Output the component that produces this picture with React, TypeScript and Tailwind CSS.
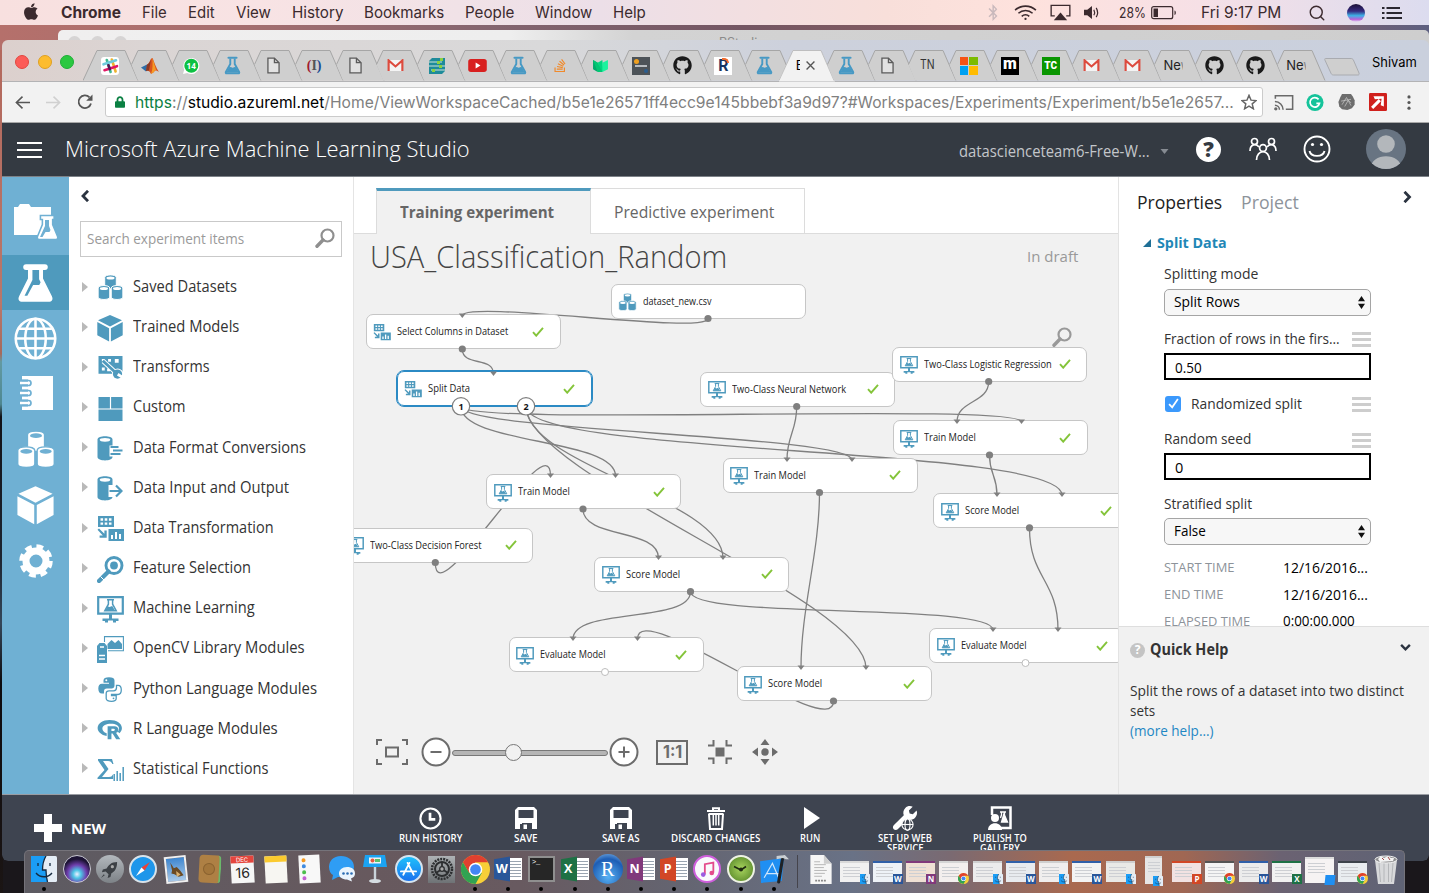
import { useLayoutEffect, useRef, useState } from "react";
import type { ReactNode } from "react";
import { FaApple, FaBluetoothB, FaGithub, FaStackOverflow, FaLock } from "react-icons/fa";
import { Search } from "lucide-react";

/* ---------- text that is condensed to a given width ---------- */
function Fit({ w, className = "", children }: { w: number; className?: string; children: ReactNode }) {
  const ref = useRef<HTMLSpanElement>(null);
  const [scale, setScale] = useState(1);
  useLayoutEffect(() => {
    if (ref.current && ref.current.offsetWidth) {
      setScale(w / ref.current.offsetWidth);
    }
  }, [w]);
  return (
    <span className={`inline-block shrink-0 whitespace-nowrap ${className}`} style={{ width: w }}>
      <span ref={ref} className="inline-block origin-left" style={{ transform: `scaleX(${scale})` }}>
        {children}
      </span>
    </span>
  );
}

/* ---------- shared glyphs ---------- */
const FLASK =
  "M6.5 1h11a1.6 1.6 0 0 1 0 3.4H16.400v5l5.200 10.300c.9 1.900 0 3.300-2 3.300H4.400c-2 0-2.900-1.400-2-3.300L7.600 9.400v-5H6.500a1.600 1.600 0 0 1 0-3.400z";
function Flask({ className = "" }: { className?: string }) {
  return (
    <svg viewBox="0 0 24 24" className={className} fill="currentColor" fillRule="evenodd">
      <path d={FLASK + "M10.200 4.400v5.800L5.600 19.500h1.600l3.400-6.300h3.600l.8-1.600-.9-1.800V4.400z"} />
    </svg>
  );
}
function FlaskLine({ className = "" }: { className?: string }) {
  return (
    <svg viewBox="0 0 24 24" className={className}>
      <path d="M9.200 3v7L3.600 20.200c-.4.900 0 1.800 1 1.800h14.800c1 0 1.400-.9 1-1.800L14.800 10V3" fill="none" stroke="currentColor" strokeWidth="2.400" />
      <path d="M7 2.200h10" stroke="currentColor" strokeWidth="2.800" strokeLinecap="round" />
      <path d="M7.500 14.500c2-1.500 4 1 5.500 0 1.300-.8 2.300-.9 3.500 0l3.600 6.500H3.900z" fill="currentColor" />
    </svg>
  );
}
function Cylinders({ className = "", hole = "#fff" }: { className?: string; hole?: string }) {
  const drum = (x: number, y: number) => (
    <g key={`${x}`}>
      <path d={`M${x} ${y}c0-3.400 12-3.400 12 0v9.500c0 3.200-12 3.200-12 0z`} fill="currentColor" stroke={hole} strokeWidth="1" />
      <ellipse cx={x + 6} cy={y + 0.6} rx="4.200" ry="1.600" fill={hole} />
    </g>
  );
  return (
    <svg viewBox="0 0 28 28" className={className}>
      {drum(8, 3)}
      {drum(1.200, 14)}
      {drum(14.800, 14)}
    </svg>
  );
}
function Cube({ className = "" }: { className?: string }) {
  return (
    <svg viewBox="0 0 26 27" className={className} fill="currentColor">
      <path d="M13 0l12 5.200-12 6.300L1 5.200zM.3 7l11.800 6.200v13.400L.3 20.200zM25.700 7l-11.800 6.200v13.400l11.800-6.400z" />
    </svg>
  );
}
function Monitor({ className = "" }: { className?: string }) {
  return (
    <svg viewBox="0 0 27 27" className={className}>
      <path d="M1.200 1.200h24.600v16.400H1.200z" fill="none" stroke="currentColor" strokeWidth="2.200" />
      <path d="M12 18h3v4.500h6.500v2.500H19v1.500h-3v-2h-5v2H8v-1.500H5.500v-2.500H12z" fill="currentColor" />
      <path d="M10 3.800h7M11.400 4v4.200L7.800 14.700h11.400L15.600 8.200V4" fill="none" stroke="currentColor" strokeWidth="1.500" />
      <path d="M10.500 10.200l2 .9 2.700-1 3 4.600H8.300z" fill="currentColor" />
    </svg>
  );
}
function Transform({ className = "" }: { className?: string }) {
  return (
    <svg viewBox="0 0 27 26" className={className} fill="currentColor" fillRule="evenodd">
      <path d="M1 0h16v11H1zM3.500 2.300v2.400h2.600V2.300zm4.200 0v2.400h2.600V2.300zm4.200 0v2.400h2.600V2.300zM3.500 6.400v2.400h2.600V6.400zm4.200 0v2.400h2.600V6.400zm4.200 0v2.400h2.600V6.400z" />
      <path d="M11.500 13H27v12H11.500zM14 19v4h2v-4zm4-3v7h2v-7zm4 2v5h2v-5z" />
      <path d="M.5 13.800l1.500-1.300 5.400 5.200V14.500h2.300v7.300H2.600v-2.300h3.200z" />
    </svg>
  );
}
function Magnifier({ className = "" }: { className?: string }) {
  return (
    <svg viewBox="0 0 20 20" className={className} fill="none" stroke="currentColor">
      <circle cx="12.500" cy="7.500" r="6" strokeWidth="2.200" />
      <path d="M8 12l-6 6.200" strokeWidth="3.400" strokeLinecap="round" />
    </svg>
  );
}
function Wrench({ className = "" }: { className?: string }) {
  return (
    <svg viewBox="0 0 24 24" className={className} fill="currentColor">
      <path d="M22.700 5.100l-3.500 3.500-2.900-.7-.7-2.900 3.500-3.500C16.600.5 14 1 12.300 2.700c-1.900 1.900-2.300 4.500-1.400 6.700L1.600 18.700c-1 1-1 2.700 0 3.700s2.700 1 3.700 0l9.300-9.300c2.200.9 4.900.5 6.700-1.400 1.800-1.700 2.300-4.300 1.400-6.600z" />
    </svg>
  );
}

/* ---------- menu bar ---------- */
const MENUS: [string, number, string][] = [
  ["Chrome", 60, "font-bold"],
  ["File", 25, ""],
  ["Edit", 27, ""],
  ["View", 35, ""],
  ["History", 51, ""],
  ["Bookmarks", 80, ""],
  ["People", 49, ""],
  ["Window", 57, ""],
  ["Help", 33, ""],
];
function MenuBar() {
  return (
    <div className="absolute inset-x-0 top-0 flex h-[25px] items-center bg-[linear-gradient(90deg,#f8e0df_0%,#f8e3e4_18%,#f1e2e7_32%,#ecdfe8_42%,#f8dfda_62%,#fee2dd_72%,#f6e0e6_84%,#dcdcef_100%)] font-['Inter',sans-serif] text-[15.500px] text-[#3b2a2e]">
      <FaApple className="ml-[22px] h-[19px] w-[18px] -translate-y-px" />
      <div className="ml-[21px] flex items-center gap-[21px]">
        {MENUS.map(([m, w, c]) => (
          <Fit key={m} w={w} className={c}>{m}</Fit>
        ))}
      </div>
      <FaBluetoothB className="ml-[337px] h-[17px] w-5 text-[#c9b9bc]" />
      <svg viewBox="0 0 26 18" className="ml-[10px] h-[17px] w-[25px]" fill="none" stroke="#3b2a2e" strokeWidth="1.700">
        <path d="M2 6.500C8 .8 18 .8 24 6.500M5.500 9.800c4.300-3.900 10.700-3.900 15 0M9 13c2.300-2 5.700-2 8 0" />
        <circle cx="13" cy="15.800" r="1.200" fill="#3b2a2e" stroke="none" />
      </svg>
      <svg viewBox="0 0 22 17" className="ml-[12px] h-[17px] w-[21px]">
        <path d="M5 12H1.200V1h19.600v11H17" fill="none" stroke="#3b2a2e" strokeWidth="1.400" />
        <path d="M11 8.500l7 8H4z" fill="#3b2a2e" />
      </svg>
      <svg viewBox="0 0 18 16" className="ml-[12px] h-[15px] w-[17px]">
        <path d="M1 5h3.500L9.500 1v14l-5-4H1z" fill="#3b2a2e" />
        <path d="M11.500 5c1 1.800 1 4.200 0 6M14 3c1.800 3 1.800 7 0 10" fill="none" stroke="#3b2a2e" strokeWidth="1.300" />
      </svg>
      <Fit w={27} className="ml-[19px] text-[14px]">28%</Fit>
      <svg viewBox="0 0 26 14" className="ml-[5px] h-[14px] w-[26px]">
        <rect x=".7" y=".7" width="21" height="12" rx="2" fill="none" stroke="#3b2a2e" strokeWidth="1.200" />
        <rect x="2.500" y="2.500" width="4.500" height="8.500" fill="#3b2a2e" />
        <path d="M23.500 4.500c1.800.5 1.800 4 0 4.500z" fill="#3b2a2e" />
      </svg>
      <Fit w={80} className="ml-[24px]">Fri 9:17 PM</Fit>
      <Search className="ml-[27px] h-[18px] w-[18px]" strokeWidth={1.900} />
      <span className="ml-[21px] h-[18px] w-[18px] rounded-full bg-[linear-gradient(180deg,#1b1035_0%,#352a80_40%,#3fb3e8_65%,#b85fd8_85%,#e9e0f5_100%)]" />
      <svg viewBox="0 0 20 12" className="ml-[17px] h-[12px] w-5" fill="#2a2730">
        <path d="M0 0h2.500v2H0zM4.500 0H18v2H4.500zM0 5h2.500v2H0zM4.500 5H20v2H4.500zM0 10h2.500v2H0zM4.500 10H20v2H4.500z" />
      </svg>
    </div>
  );
}

/* ---------- browser tabs ---------- */
const SlackIcon = () => (
  <svg viewBox="0 0 18 18" className="h-[18px] w-[18px]">
    <rect width="18" height="18" rx="3" fill="#fff" />
    <g strokeWidth="2.600" strokeLinecap="round">
      <path d="M5.800 3l3.800 12" stroke="#3eb991" />
      <path d="M10.800 2.500l3.800 12" stroke="#ecb22e" />
      <path d="M2.500 7.300l12.500-4" stroke="#6ecadc" />
      <path d="M3.500 13.200l12.500-4" stroke="#e01765" />
      <path d="M7.500 8.300l1.300 3.900" stroke="#541755" />
    </g>
  </svg>
);
const MatlabIcon = () => (
  <svg viewBox="0 0 18 18" className="h-[18px] w-[18px]">
    <path d="M0 10.500l6-3 3 3-4 4z" fill="#2f6ea8" />
    <path d="M6 7.500c3-1 3-6.500 5.500-6.500C13 4 15 11 18 15c-3-2-4-2-5 0l-3 2c-1-3-3-4-5-3z" fill="#d9541e" />
    <path d="M11.500 1c1.200 4 2.500 8 3.500 12-1 .300-1.500.8-2 2l-3 2c2-5 1.500-10 1.500-16z" fill="#f59a23" />
    <path d="M6 7.500c2-.5 3-3 4-5l-2 11-3 .5z" fill="#5a2a2a" opacity=".6" />
  </svg>
);
const WhatsIcon = () => (
  <svg viewBox="0 0 18 18" className="h-[18px] w-[18px]">
    <path d="M1 17l1.200-4.300A8 8 0 1 1 5.300 16z" fill="#fff" />
    <circle cx="9.300" cy="8.800" r="7" fill="#0dc143" />
    <text x="9.200" y="11.800" textAnchor="middle" className="font-['Open_Sans',sans-serif] text-[8px] font-bold" fill="#fff">14</text>
  </svg>
);
const FlaskIcon = () => <FlaskLine className="h-[19px] w-[19px] text-[#4799c4]" />;
const PageIcon = () => (
  <svg viewBox="0 0 14 18" className="h-[17px] w-[13px]" fill="#e2e2e2" stroke="#5b5b5b" strokeWidth="1.400">
    <path d="M1 1h7l5 5v11H1zM8 1v5h5" />
  </svg>
);
const ParenIcon = () => (
  <span className="font-['Liberation_Serif',serif] text-[14px] font-bold leading-none">
    <span className="text-[#a01c30]">(</span>
    <span className="text-[#555]">I</span>
    <span className="text-[#1b4a8f]">)</span>
  </span>
);
const GmailIcon = () => (
  <svg viewBox="0 0 18 14" className="h-[13px] w-[17px]">
    <path d="M1 1h16v12H1z" fill="#f4f4f4" />
    <path d="M1.600 13V1.500L9 8l7.400-6.500V13" fill="none" stroke="#dd4b3e" strokeWidth="2.300" />
  </svg>
);
const StripeIcon = () => (
  <svg viewBox="0 0 18 18" className="h-[18px] w-[18px]">
    <path d="M4 1h13v13l-3 3H1V4z" fill="#1e8b9a" />
    <path d="M1 5h13M1 9h16M3 13h14" stroke="#cfe3d8" strokeWidth="1" />
    <path d="M12 1h3v3h-3zM9 4h3v3H9zM11 8h3v3h-3zM4 12h3v3H4z" fill="#8bd13f" />
  </svg>
);
const MediumIcon = () => (
  <svg viewBox="0 0 18 15" className="h-[14px] w-[17px]">
    <path d="M1 1l5 3v10l-5-3z" fill="#00ab6b" />
    <path d="M1 1l5 3 5 7v3L6 14z" fill="#00c773" />
    <path d="M6 4l5-3 1 11-1 2z" fill="#00d680" />
    <path d="M11 4l6-3v10l-6 3z" fill="#1cf29e" />
  </svg>
);
const DarkIcon = () => (
  <span className="relative h-[18px] w-[18px] bg-[#4d5358]">
    <span className="absolute left-0.5 top-0.5 h-[5px] w-[5px] rounded-full bg-[#f0a020]" />
    <span className="absolute left-[3px] top-[8px] h-[2px] w-[12px] bg-[#b8bcc0]" />
    <span className="absolute bottom-0.5 right-0.5 h-[4px] w-[4px] rounded-full bg-[#2a5d8e]" />
  </span>
);
const RIcon = () => (
  <span className="relative flex h-[18px] w-[18px] items-center justify-center bg-white font-['Roboto',sans-serif] text-[16px] font-bold leading-none text-[#17345f]">
    R<span className="absolute right-[3px] top-[1px] h-[5px] w-[7px] rounded-tr-full border-r-2 border-t-2 border-[#ee6a2c]" />
  </span>
);
const GhIcon = () => <FaGithub className="h-[19px] w-[19px] text-[#1a1a1a]" />;
const MsIcon = () => (
  <span className="grid h-[18px] w-[18px] shrink-0 grid-cols-2 gap-px">
    <span className="bg-[#f65314]" />
    <span className="bg-[#7cbb00]" />
    <span className="bg-[#00a1f1]" />
    <span className="bg-[#ffbb00]" />
  </span>
);
const MIcon = () => (
  <span className="flex h-[18px] w-[18px] items-center justify-center bg-black pb-1 font-['Roboto',sans-serif] text-[16px] font-black leading-none text-white">m</span>
);
const TcIcon = () => (
  <span className="flex h-[18px] w-[18px] items-center justify-center bg-[#0a9600] font-['Roboto',sans-serif] text-[10px] font-black leading-none text-white">TC</span>
);
const TnIcon = () => <Fit w={15} className="font-['Inter',sans-serif] text-[12.500px] text-[#333]">TN</Fit>;
const NeIcon = () => (
  <span className="flex w-[22px] shrink-0 items-baseline overflow-hidden pl-px font-['Inter',sans-serif] text-[13px] text-[#222]">
    <Fit w={17}>Ne</Fit><span className="w-[3px] overflow-hidden text-[#888]">w</span>
  </span>
);
const ActiveLabel = () => (
  <span className="flex items-center gap-1.5 font-['Inter',sans-serif] text-[13px] text-black">
    <span className="w-[4px] overflow-hidden">E</span>
    <svg viewBox="0 0 8 8" className="h-[9px] w-[9px]" stroke="#555" strokeWidth="1.200"><path d="M.5.5l7 7M7.500.5l-7 7" /></svg>
  </span>
);
const YtIcon = () => (
  <svg viewBox="0 0 20 14" className="h-[13px] w-[19px]"><rect width="20" height="14" rx="3" fill="#d8201f" /><path d="M8 3.800v6.400L13.200 7z" fill="#fff" /></svg>
);
const SoIcon = () => <FaStackOverflow className="h-[15px] w-[14px] text-[#f08a2c]" />;

const TABS = [
  SlackIcon, MatlabIcon, WhatsIcon, FlaskIcon, PageIcon, ParenIcon, PageIcon, GmailIcon, StripeIcon, YtIcon,
  FlaskIcon, SoIcon, MediumIcon, DarkIcon, GhIcon, RIcon, FlaskIcon, ActiveLabel, FlaskIcon, PageIcon,
  TnIcon, MsIcon, MIcon, TcIcon, GmailIcon, GmailIcon, NeIcon, GhIcon, GhIcon, NeIcon,
];

function TabStrip() {
  return (
    <div className="flex h-[42px] shrink-0 items-end border-b border-[#b3b3b5] bg-[linear-gradient(90deg,#dcd0cd_0%,#dbd5d4_10%,#d9d9da_38%,#cdd1dc_55%,#cad0dd_100%)]">
      <div className="flex w-[81px] items-center gap-[8.500px] self-center pl-[13px] pt-0.5">
        <span className="h-[14px] w-[14px] rounded-full border border-[#e2463f] bg-[#fc5b57]" />
        <span className="h-[14px] w-[14px] rounded-full border border-[#dfa023] bg-[#fdbc2e]" />
        <span className="h-[14px] w-[14px] rounded-full border border-[#1fae36] bg-[#2bc840]" />
      </div>
      {TABS.map((Icon, i) => {
        const active = i === 17;
        return (
          <div key={i} className="relative h-[31px] w-[40.930px] shrink-0">
            <svg viewBox="0 0 58 32" className="absolute left-0 top-0 h-[32px] w-[58px]">
              {active ? (
                <path d="M-1 31.500L14 .5H42L56 31.500z" fill="#f2f2f2" />
              ) : i === 0 ? (
                <path d="M0 30.500L14 .5H42L55 30.500" fill="#cfcfcf" stroke="#a6a6a6" strokeWidth="1" />
              ) : (
                <>
                  <path d="M7.500 14.500L14 .5H42L55 30.500H14z" fill="#cfcfcf" />
                  <path d="M7.500 14.500L14 .5H42L55 30.500" fill="none" stroke="#a6a6a6" strokeWidth="1" />
                </>
              )}
              {active && <path d="M0 30.500L14 .5H42L55 30.500" fill="none" stroke="#b5b5b5" strokeWidth=".8" />}
            </svg>
            <div className="relative ml-[15.500px] flex h-[31px] w-[22px] items-center justify-center">
              <Icon />
            </div>
          </div>
        );
      })}
      <svg viewBox="0 0 36 18" className="mb-[5px] ml-[13px] h-[18px] w-[36px] shrink-0">
        <path d="M1.500.5H27c1 0 2 .6 2.400 1.500L35 15c.4 1.300 0 2-1 2H9.500c-1.200 0-2-.6-2.400-1.500L.9 2C.6 1 .6.500 1.500.5z" fill="#cfcfcf" stroke="#a9abb0" />
      </svg>
      <Fit w={45} className="mb-[9px] ml-[12px] font-['Inter',sans-serif] text-[13.500px] text-black">Shivam</Fit>
    </div>
  );
}

function AddressBar() {
  return (
    <div className="flex h-[41px] shrink-0 items-center border-b border-[#a8a8a8] bg-[#f2f2f2]">
      <svg viewBox="0 0 16 14" className="ml-[13px] h-[15px] w-[15px]" fill="none" stroke="#565656" strokeWidth="1.700"><path d="M8 .8L1.500 7 8 13.200M1.500 7H16" /></svg>
      <svg viewBox="0 0 16 14" className="ml-[16px] h-[15px] w-[15px]" fill="none" stroke="#d0d0d0" strokeWidth="1.700"><path d="M8 .8L14.500 7 8 13.200M14.500 7H0" /></svg>
      <svg viewBox="0 0 16 16" className="ml-[16px] h-[16px] w-[16px]"><path d="M14 9.500A6.300 6.300 0 1 1 12.500 3.400" fill="none" stroke="#565656" strokeWidth="1.800" /><path d="M15.500.5v6.300H9.200z" fill="#565656" /></svg>
      <div className="ml-[12px] flex h-[30px] w-[1158px] items-center rounded-[3px] border border-[#cbcbcb] bg-white font-['Inter',sans-serif] text-[16px]">
        <FaLock className="ml-[9px] h-[12px] w-[10px] text-[#0b8043]" />
        <Fit w={1099} className="ml-[10px] text-[#808080]">
          <span className="text-[#0b8043]">https</span>://<span className="text-black">studio.azureml.net</span>/Home/ViewWorkspaceCached/b5e1e26571ff4ecc9e145bbebf3a9d97?#Workspaces/Experiments/Experiment/b5e1e2657...
        </Fit>
        <svg viewBox="0 0 24 24" className="ml-[7px] h-[16px] w-[16px]" fill="none" stroke="#666" strokeWidth="2.200"><path d="M12 2l3 7.200 7.500.6-5.700 5 1.800 7.400L12 18.200l-6.600 4 1.800-7.400-5.700-5L9 9.200z" /></svg>
      </div>
      <svg viewBox="0 0 22 18" className="ml-[11px] h-[17px] w-[20px]" fill="none" stroke="#6a6a6a" strokeWidth="1.700">
        <path d="M1.500 5V1.500h19v15H13M1 8a9 9 0 0 1 9 9M1 12a5 5 0 0 1 5 5" />
        <circle cx="2" cy="16" r="1" fill="#6a6a6a" />
      </svg>
      <svg viewBox="0 0 20 20" className="ml-[12px] h-[19px] w-[18px]">
        <circle cx="10" cy="10" r="9.500" fill="#15c39a" />
        <path d="M14 6.500A5.300 5.300 0 1 0 15 11h-3.500" fill="none" stroke="#fff" strokeWidth="1.900" />
      </svg>
      <svg viewBox="0 0 20 20" className="ml-[13px] h-[18px] w-[19px]">
        <path d="M5 1h10l2 3 2 4v5l-3 4-5 2-6-1-3-3-1-5 2-5z" fill="#6d6d6d" />
        <path d="M5 13l5-8 5 9M4 9l11-2M8 15l4-7 3 3" fill="none" stroke="#c9c9c9" strokeWidth=".8" />
      </svg>
      <svg viewBox="0 0 20 20" className="ml-[13px] h-[18px] w-[18px]">
        <rect width="20" height="20" rx="1.500" fill="#d0201c" />
        <path d="M3.500 16.500L12 8" stroke="#fff" strokeWidth="3.400" />
        <path d="M5 3.500h11.500V15l-3.500-1.500 1-7-7.500.5z" fill="#fff" />
      </svg>
      <svg viewBox="0 0 4 16" className="ml-[20px] h-[15px] w-[4px]" fill="#565656"><circle cx="2" cy="2" r="1.700" /><circle cx="2" cy="8" r="1.700" /><circle cx="2" cy="14" r="1.700" /></svg>
    </div>
  );
}

/* ---------- studio header ---------- */
function StudioHeader() {
  return (
    <div className="flex h-[54px] shrink-0 items-center border-b border-[#7d8288] bg-[#343a42] pb-px font-['Open_Sans',sans-serif] text-white">
      <div className="ml-[15px] mt-px flex w-[25px] flex-col gap-[5px]">
        <span className="h-[2px] bg-white" /><span className="h-[2px] bg-white" /><span className="h-[2px] bg-white" />
      </div>
      <Fit w={405} className="ml-[23px] text-[22.500px] font-light leading-[30px]">Microsoft Azure Machine Learning Studio</Fit>
      <Fit w={191} className="ml-[489px] mt-[6px] text-[15.500px] text-[#c3c6ca]">datascienceteam6-Free-W...</Fit>
      <svg viewBox="0 0 8 5" className="ml-[10px] mt-1 h-[5px] w-[9px]" fill="#868b92"><path d="M0 0h8L4 5z" /></svg>
      <span className="ml-[27px] flex h-[25px] w-[25px] items-center justify-center rounded-full bg-white text-[21px] font-extrabold leading-none text-[#343a42]">?</span>
      <svg viewBox="0 0 28 24" className="ml-[28px] h-[24px] w-[28px]" fill="none" stroke="#fff" strokeWidth="1.700">
        <circle cx="5.500" cy="4.500" r="3" /><circle cx="22.500" cy="4.500" r="3" /><circle cx="14" cy="11" r="3.400" />
        <path d="M1 14c0-7 6-8 9-4M27 14c0-7-6-8-9-4M7.500 23c0-11 13-11 13 0" />
      </svg>
      <svg viewBox="0 0 28 28" className="ml-[26px] h-[28px] w-[28px]" fill="none" stroke="#fff" strokeWidth="1.900">
        <circle cx="14" cy="14" r="12.500" /><path d="M6.500 16c1.500 6.500 13.500 6.500 15 0" />
        <circle cx="9.500" cy="9.500" r="1.600" fill="#fff" stroke="none" /><circle cx="18.500" cy="9.500" r="1.600" fill="#fff" stroke="none" />
      </svg>
      <svg viewBox="0 0 40 40" className="ml-[35px] h-[40px] w-[40px]">
        <defs><clipPath id="avatar"><circle cx="20" cy="20" r="20" /></clipPath></defs>
        <g clipPath="url(#avatar)"><rect width="40" height="40" fill="#687482" /><circle cx="20" cy="15" r="8.800" fill="#b3b7bb" /><path d="M4.500 40c0-17 31-17 31 0z" fill="#b3b7bb" /></g>
      </svg>
    </div>
  );
}

/* ---------- left navigation ---------- */
function NavRail() {
  return (
    <div className="flex w-[67px] shrink-0 flex-col items-center bg-[#6fb0d3] text-white">
      <div className="flex h-[78px] w-full items-center justify-center pt-[11px]">
        <svg viewBox="0 0 44 36" className="ml-px h-[36px] w-[44px]">
          <path d="M0 3h4l2-3h9l2 3h20v28H0z" fill="#fff" />
          <g transform="translate(22.500 10.500) scale(.98 1)" stroke="#6fb0d3" strokeWidth="1.600"><path d="M4 1h14v4h-1.500v5l5 12c.5 1.500 0 3-1.500 3H2.500C1 25 .5 23.500 1 22l5-12V5H4z" fill="#fff" /></g>
          <path d="M31 16v6l-5 11h2.500l3-5h4l1-2-1.500-4v-6" fill="#6fb0d3" />
        </svg>
      </div>
      <div className="flex h-[55px] w-full items-center justify-center bg-[#4f9abd] pt-px"><Flask className="h-[42px] w-[41px]" /></div>
      <div className="flex h-[56px] items-center">
        <svg viewBox="0 0 42 42" className="h-[43px] w-[43px]" fill="none" stroke="#fff" strokeWidth="2.500">
          <circle cx="21" cy="21" r="19.300" /><ellipse cx="21" cy="21" rx="10" ry="19.300" /><path d="M21 2v38M2 21h38M5 11.500h32M5 30.500h32" />
        </svg>
      </div>
      <div className="flex h-[53px] items-center">
        <svg viewBox="0 0 34 34" className="h-[34px] w-[34px]">
          <path d="M3 0h31v34H3z" fill="#fff" />
          <path d="M0 7h9M0 17h9M0 27h9" stroke="#6fb0d3" strokeWidth="7" />
          <path d="M1 7h9M1 17h9M1 27h9" stroke="#fff" strokeWidth="2.600" />
          <path d="M3 4.500h6.500a2.500 2.500 0 0 1 0 5H3M3 14.500h6.500a2.500 2.500 0 0 1 0 5H3M3 24.500h6.500a2.500 2.500 0 0 1 0 5H3" fill="none" stroke="#6fb0d3" strokeWidth="1.700" />
        </svg>
      </div>
      <div className="flex h-[59px] items-center pt-1"><Cylinders className="h-[41px] w-[40px]" hole="#6fb0d3" /></div>
      <div className="flex h-[55px] items-center"><Cube className="h-[39px] w-[37px]" /></div>
      <div className="flex h-[55px] items-center">
        <svg viewBox="0 0 34 34" className="h-[34px] w-[34px]">
          <circle cx="17" cy="17" r="10" fill="none" stroke="#fff" strokeWidth="7" />
          <circle cx="17" cy="17" r="14.500" fill="none" stroke="#fff" strokeWidth="4.500" strokeDasharray="6.700 4.690" />
        </svg>
      </div>
    </div>
  );
}

const MODULES: { label: string; w: number; icon: ReactNode }[] = [
  { label: "Saved Datasets", w: 104, icon: <Cylinders className="h-[28px] w-[27px]" /> },
  { label: "Trained Models", w: 106.500, icon: <Cube className="h-[27px] w-[26px]" /> },
  {
    label: "Transforms", w: 76.500, icon: (
      <svg viewBox="0 0 25 25" className="h-[24px] w-[25px]">
        <path d="M0 0h25v18.500H0z" fill="currentColor" />
        <path d="M3.500 3h3v3h-3zM10 3h3v3h-3zM17 3h4v4h-4zM3.500 12h3v3h-3zM9 13h3v3H9z" fill="#fff" />
        <path d="M5 5.500l13 12" stroke="#fff" strokeWidth="5" />
        <circle cx="20" cy="19" r="6" fill="#fff" />
        <path d="M4.500 5l14 13" stroke="currentColor" strokeWidth="3" />
        <circle cx="19.800" cy="18.800" r="4.800" fill="currentColor" /><path d="M20 19l5.500 3.500" stroke="#fff" strokeWidth="3" />
      </svg>
    ),
  },
  { label: "Custom", w: 52.500, icon: <svg viewBox="0 0 24 24" className="h-[24px] w-[25px]" fill="currentColor"><path d="M0 0h11.400v11.400H0zM12.600 0H24v11.400H12.600zM0 12.600h24V24H0z" /></svg> },
  { label: "Data Format Conversions", w: 173, icon: <svg viewBox="0 0 25 25" className="h-[25px] w-[26px]"><path d="M0 3.500C0-.8 15-.8 15 3.500V21c0 4.500-15 4.500-15 0z" fill="currentColor" /><ellipse cx="7.500" cy="3.800" rx="5.300" ry="1.900" fill="#fff" /><path d="M12 9.500h13v11H12z" fill="#fff" /><path d="M13 11h8M15.500 14.500H25M13 18h10" stroke="currentColor" strokeWidth="1.900" /></svg> },
  { label: "Data Input and Output", w: 156.500, icon: <svg viewBox="0 0 25 25" className="h-[25px] w-[26px]"><path d="M0 3.500C0-.8 15-.8 15 3.500V21c0 4.500-15 4.500-15 0z" fill="currentColor" /><ellipse cx="7.500" cy="3.800" rx="5.300" ry="1.900" fill="#fff" /><path d="M11 9h14v12H11z" fill="#fff" /><path d="M12 15h12M18.500 9.500L24 15l-5.500 5.500" fill="none" stroke="currentColor" strokeWidth="2.200" /></svg> },
  { label: "Data Transformation", w: 141, icon: <Transform className="h-[26px] w-[27px]" /> },
  { label: "Feature Selection", w: 118, icon: <svg viewBox="0 0 27 27" className="h-[27px] w-[27px]" fill="none" stroke="currentColor"><circle cx="17" cy="9.500" r="8" strokeWidth="2.900" /><circle cx="17" cy="9.500" r="3.900" fill="currentColor" stroke="none" /><path d="M11.500 15.500L2 25" strokeWidth="4.200" strokeLinecap="round" /><path d="M3.500 20.500l3.500 3.500" stroke="#fff" strokeWidth="1" /></svg> },
  { label: "Machine Learning", w: 122, icon: <Monitor className="h-[27px] w-[27px]" /> },
  { label: "OpenCV Library Modules", w: 172, icon: <svg viewBox="0 0 27 27" className="h-[27px] w-[27px]"><path d="M7.500 6V.6H26.400v14.200H11" fill="none" stroke="currentColor" strokeWidth="1.100" /><path d="M10.500 8l4-4 3.500 3 3.500-3 3.500 4v5H10.500z" fill="currentColor" /><path d="M0 10l2.500-3h5l2.500 3v17H0z" fill="currentColor" /><path d="M2 19.500h6M2 23h6M3 11h4" stroke="#fff" strokeWidth="1.300" /></svg> },
  {
    label: "Python Language Modules", w: 184, icon: (
      <svg viewBox="0 0 24 25" className="h-[25px] w-[24px]">
        <path d="M5.500 3.500C5.500 1 7.500.3 11 .3s5.500.7 5.500 3.200v5c0 2-1.200 3-3 3H9c-2.200 0-3 1-3 3v2H4c-2.500 0-3.700-2-3.700-5s1.200-4.800 3.700-4.800h7V5.800H5.500z" fill="currentColor" />
        <circle cx="8.300" cy="3.200" r="1" fill="#fff" />
        <path d="M18.500 8.300h1.500c2.300 0 3.300 1.800 3.300 4.500s-1 4.700-3.300 4.700h-6.500v1h4.700v3c0 2-1.700 2.800-4.700 2.800s-5.300-.8-5.300-2.800v-5c0-1.800 1-2.700 2.800-2.700h4.500c2 0 3-1.200 3-3z" fill="none" stroke="currentColor" strokeWidth="1.300" />
        <circle cx="15.500" cy="21.300" r=".9" fill="currentColor" />
      </svg>
    ),
  },
  { label: "R Language Modules", w: 145, icon: <svg viewBox="0 0 26 21" className="h-[20px] w-[26px]"><path fillRule="evenodd" d="M12.500 0C5.500 0 0 3.500 0 8.500c0 4 4 7.500 9.500 8.400v-3C6.500 13 5 11.300 5 9c0-3.200 4-5 9-5s8.500 1.800 8.500 5c0 1.300-.4 2.500-1.500 3.200l1.800 1.600C24.700 12.500 25.500 10.600 25.500 8.500 25.500 3.500 20 0 12.500 0z" fill="currentColor" /><path fillRule="evenodd" d="M10.500 6.500h7.200c5.300 0 5.300 6.300 1.600 7l4.500 6.800H19.500l-3.800-6.200h-1.200v6.200h-4zM14.500 9.300v2.200h2.300c1.800 0 1.800-2.200 0-2.200z" fill="currentColor" /></svg> },
  { label: "Statistical Functions", w: 135.500, icon: <svg viewBox="0 0 27 22" className="h-[22px] w-[27px]"><path d="M1 0h14l1.500 5h-1.200C14.500 3 13.500 2 11 2H6l5.500 8L5 18h7c2 0 3-.8 4-2.500V20H.5v-1.200L7.500 11 1 1.500z" fill="currentColor" /><path d="M17.200 15v7M20.200 12v10M23.200 14v8M26.200 8v14" stroke="currentColor" strokeWidth="1.500" /></svg> },
];

function ModulePanel() {
  return (
    <div className="flex w-[285px] shrink-0 flex-col border-r border-r-[#e4e4e4] bg-white font-['Open_Sans',sans-serif] text-[15.500px] text-[#333]">
      <svg viewBox="0 0 8 12" className="ml-[12px] mt-[13px] h-[12px] w-[8px] shrink-0" fill="none" stroke="#2b3340" strokeWidth="2.800"><path d="M7 .8L2 6l5 5.200" /></svg>
      <div className="ml-[11px] mt-[19px] flex h-[36px] w-[262px] shrink-0 items-center border border-[#c9c9c9] pb-[2px]">
        <Fit w={157.500} className="ml-[6px] text-[15px] text-[#9a9a9a]">Search experiment items</Fit>
        <Magnifier className="ml-[70px] h-[20px] w-[20px] text-[#8f8f8f]" />
      </div>
      <div className="mt-[9.500px] flex flex-col">
        {MODULES.map((m) => (
          <div key={m.label} className="flex h-[40.170px] items-center">
            <svg viewBox="0 0 6 10" className="ml-[13px] h-[10px] w-[6px]" fill="#b9b9b9"><path d="M0 0l6 5-6 5z" /></svg>
            <span className="ml-[6px] flex w-[32px] items-center justify-center pt-[3px] text-[#4f9abd]">{m.icon}</span>
            <Fit w={m.w} className="ml-[6.500px]">{m.label}</Fit>
          </div>
        ))}
      </div>
    </div>
  );
}

/* ---------- experiment canvas ---------- */
type NodeKind = "data" | "transform" | "model";
const NODES: { x: number; y: number; label: string; w: number; kind: NodeKind; selected?: boolean }[] = [
  { x: 700, y: 371.500, label: "Two-Class Neural Network", w: 114.500, kind: "model" },
  { x: 611, y: 283.500, label: "dataset_new.csv", w: 68.500, kind: "data" },
  { x: 365.500, y: 314, label: "Select Columns in Dataset", w: 111.500, kind: "transform" },
  { x: 396.500, y: 371, label: "Split Data", w: 42, kind: "transform", selected: true },
  { x: 892, y: 346.500, label: "Two-Class Logistic Regression", w: 128, kind: "model" },
  { x: 892.700, y: 420, label: "Train Model", w: 51.500, kind: "model" },
  { x: 722.500, y: 457.500, label: "Train Model", w: 51.500, kind: "model" },
  { x: 486.300, y: 474, label: "Train Model", w: 51.500, kind: "model" },
  { x: 933, y: 493, label: "Score Model", w: 54.500, kind: "model" },
  { x: 338.400, y: 527.500, label: "Two-Class Decision Forest", w: 111.500, kind: "model" },
  { x: 594, y: 556.500, label: "Score Model", w: 54.500, kind: "model" },
  { x: 508.500, y: 637, label: "Evaluate Model", w: 66, kind: "model" },
  { x: 736.500, y: 666, label: "Score Model", w: 54.500, kind: "model" },
  { x: 929, y: 628, label: "Evaluate Model", w: 66, kind: "model" },
];
/* x1, y1, x2, y2, bend */
const EDGES: [number, number, number, number, number][] = [
  [708, 318.500, 462.300, 316, 17],
  [462.300, 349, 493.500, 374, 18],
  [461, 406.500, 1021.500, 422, 20],
  [461, 406.500, 852, 460, 25],
  [461, 406.500, 615.500, 476, 38],
  [526, 406.500, 1062, 495, 50],
  [526, 406.500, 723, 558, 58],
  [526, 406.500, 866, 668, 68],
  [796.700, 406.500, 787, 460, 25],
  [988.700, 381.500, 957, 422, 22],
  [989.500, 455, 997, 495, 20],
  [435.300, 562.500, 550.500, 476, 57],
  [583, 509, 658.500, 558, 30],
  [819.500, 492.500, 801, 668, 60],
  [1029.500, 528, 1058, 630, 50],
  [690.500, 591.700, 573, 639, 32],
  [690.500, 591.700, 993, 630, 28],
  [833.500, 701, 637.500, 639, 44],
];
const OUT_PORTS: [number, number][] = [
  [708, 318.500], [462.300, 349], [796.700, 406.500], [988.700, 381.500], [989.500, 455], [819.500, 492.500],
  [583, 509], [1029.500, 527.800], [435.300, 562.500], [690.500, 591.700], [833.500, 701],
];
const ORIGIN_X = 354;
const ORIGIN_Y = 234;

function GraphNode({ n }: { n: (typeof NODES)[number] }) {
  return (
    <div
      className={`absolute flex h-[35px] w-[195px] items-center rounded-[7px] bg-white ${n.selected ? "border border-[#2b8ac4] outline-[.5px] outline-[#2b8ac4]" : "border border-[#c6c6c6]"}`}
      style={{ left: n.x - ORIGIN_X, top: n.y - ORIGIN_Y }}
    >
      <span className="ml-[6px] mt-[2px] flex w-[19px] shrink-0 justify-center text-[#4f9abd]">
        {n.kind === "data" && <Cylinders className="h-[19px] w-[19px]" />}
        {n.kind === "transform" && <Transform className="h-[17px] w-[18px]" />}
        {n.kind === "model" && <Monitor className="h-[18px] w-[18px]" />}
      </span>
      <span className="ml-[5.500px] flex w-[135px] items-center pb-px">
        <Fit w={n.w} className="font-['Open_Sans',sans-serif] text-[10.300px] leading-[16px] text-[#222]">{n.label}</Fit>
      </span>
      {n.kind !== "data" && (
        <svg viewBox="0 0 12 10" className="h-[10px] w-[12px] shrink-0" fill="none" stroke="#84c43a" strokeWidth="1.900"><path d="M1 5.200l3.200 3.500L11 .9" /></svg>
      )}
    </div>
  );
}

function Canvas() {
  return (
    <div className="relative flex flex-1 flex-col overflow-hidden bg-[#f1f1f1] font-['Open_Sans',sans-serif]">
      <Magnifier className="absolute left-[698px] top-[93px] h-[20px] w-[20px] text-[#999]" />
      <svg viewBox="354 234 764 560" className="absolute left-0 top-0 h-[560px] w-[764px]" fill="none" stroke="#808080" strokeWidth="1.300">
        {EDGES.map(([a, b, c, d, k], i) => (
          <path key={i} d={`M${a} ${b}C${a} ${b + k} ${c} ${d - k} ${c} ${d}`} />
        ))}
      </svg>
      {NODES.map((n, i) => (
        <GraphNode key={i} n={n} />
      ))}
      <svg viewBox="354 234 764 560" className="absolute left-0 top-0 h-[560px] w-[764px]">
        {EDGES.map(([, , c, d], i) => (
          <path key={i} d={`M${c - 3.500} ${d - 2.500}h7l-3.500 4.500z`} fill="#808080" />
        ))}
        {OUT_PORTS.map(([x, y], i) => (
          <circle key={i} cx={x} cy={y} r="3.600" fill="#7f7f7f" />
        ))}
        {[[605, 672], [1025.500, 663]].map(([x, y]) => (
          <circle key={x} cx={x} cy={y} r="3.500" fill="#fff" stroke="#bdbdbd" />
        ))}
        {([["1", 461], ["2", 526]] as [string, number][]).map(([t, x]) => (
          <g key={t}>
            <circle cx={x} cy="406.300" r="8.700" fill="#fff" stroke="#7f7f7f" strokeWidth="1.200" />
            <text x={x} y="409.500" textAnchor="middle" className="font-['Open_Sans',sans-serif] text-[9px] font-bold" fill="#111">{t}</text>
          </g>
        ))}
      </svg>
      <div className="relative flex h-[46px] items-center justify-between pl-[16px] pr-[40px]">
        <Fit w={357} className="text-[30.500px] font-light text-[#444]">USA_Classification_Random</Fit>
        <Fit w={51} className="pb-px text-[15px] text-[#999]">In draft</Fit>
      </div>
      <div className="relative mb-[27px] ml-[22px] mt-auto flex h-[30px] items-center text-[#6c6c6c]">
        <svg viewBox="0 0 32 26" className="h-[26px] w-[32px]" fill="none" stroke="currentColor" strokeWidth="2"><path d="M1 6V1h5M26 1h5v5M31 20v5h-5M6 25H1v-5M10 8.500h12v9H10z" /></svg>
        <svg viewBox="0 0 30 30" className="ml-[13px] h-[30px] w-[30px]"><circle cx="15" cy="15" r="13.500" fill="#fff" stroke="currentColor" strokeWidth="2" /><path d="M9.500 15h11" stroke="currentColor" strokeWidth="2" /></svg>
        <div className="relative ml-px mt-px h-[6px] w-[156px] rounded-full border border-[#777] bg-[#b5b5b5]">
          <span className="absolute left-[52px] top-[-7px] h-[17px] w-[17px] rounded-full border border-[#777] bg-[#f1f1f1]" />
        </div>
        <svg viewBox="0 0 30 30" className="ml-px h-[30px] w-[30px]"><circle cx="15" cy="15" r="13.500" fill="#fff" stroke="currentColor" strokeWidth="2" /><path d="M9.500 15h11M15 9.500v11" stroke="currentColor" strokeWidth="2" /></svg>
        <span className="ml-[17px] flex h-[25px] w-[32px] items-center justify-center border-2 border-[#6c6c6c] font-['Inter',sans-serif] text-[17px] font-bold leading-none"><Fit w={19}>1:1</Fit></span>
        <svg viewBox="0 0 26 26" className="ml-[19px] h-[26px] w-[26px]" fill="none" stroke="currentColor" strokeWidth="2"><path d="M8.500 8.500h9v9h-9z" fill="currentColor" stroke="none" /><path d="M1 6.500h5.500V1M19.500 1v5.500H25M25 19.500h-5.500V25M6.500 25v-5.500H1" /></svg>
        <svg viewBox="0 0 26 26" className="ml-[19px] h-[26px] w-[26px]" fill="currentColor"><path d="M13 0l4.500 6h-9zM13 26l4.500-6h-9zM0 13l6-4.500v9zM26 13l-6-4.500v9z" /><circle cx="13" cy="13" r="3.700" /></svg>
      </div>
    </div>
  );
}

function Workspace() {
  return (
    <div className="flex w-[764px] shrink-0 flex-col">
      <div className="flex h-[57px] shrink-0 items-end bg-white font-['Open_Sans',sans-serif] text-[15.500px] text-[#666]">
        <div className="h-px w-[22px] bg-[#dcdcdc]" />
        <div className="flex h-[46px] w-[215px] items-center border-x border-t-[3px] border-x-[#dcdcdc] border-t-[#4f9abd] bg-[#f1f1f1] pl-[23px]">
          <Fit w={154} className="font-bold">Training experiment</Fit>
        </div>
        <div className="flex h-[46px] w-[214px] items-center border-y border-r border-[#dcdcdc] pl-[23px] pt-[3px]">
          <Fit w={160}>Predictive experiment</Fit>
        </div>
        <div className="h-px flex-1 bg-[#dcdcdc]" />
      </div>
      <Canvas />
    </div>
  );
}

/* ---------- properties ---------- */
function Select({ label, w }: { label: string; w: number }) {
  return (
    <div className="flex h-[27px] w-[207px] shrink-0 items-center justify-between rounded-[5px] border border-[#a5a5a5] bg-[#f7f7f7] pl-[9px] pr-[5px] text-black">
      <Fit w={w} className="pb-px">{label}</Fit>
      <svg viewBox="0 0 7 13" className="h-[13px] w-[7px]" fill="#111"><path d="M0 5.300L3.500 0 7 5.300zM0 7.700h7L3.500 13z" /></svg>
    </div>
  );
}
const Grip = () => (
  <span className="flex w-[19px] flex-col gap-[3px] pt-0.5"><span className="h-[3px] bg-[#cdcdcd]" /><span className="h-[3px] bg-[#cdcdcd]" /><span className="h-[3px] bg-[#cdcdcd]" /></span>
);
function Properties() {
  return (
    <div className="flex flex-1 flex-col border-l border-[#e3e3e3] bg-white font-['Open_Sans',sans-serif] text-[14.500px] text-[#333]">
      <div className="flex h-[449px] flex-col overflow-hidden">
        <div className="flex h-[50px] shrink-0 items-center pl-[18px] text-[18px]">
          <Fit w={85} className="text-[#222]">Properties</Fit>
          <Fit w={58} className="ml-[19px] text-[#8d939a]">Project</Fit>
          <svg viewBox="0 0 8 12" className="mb-[11px] ml-[104px] h-[12px] w-[9px]" fill="none" stroke="#2b3340" strokeWidth="2.800"><path d="M1 .8L6 6l-5 5.200" /></svg>
        </div>
        <div className="flex h-[31px] shrink-0 items-center pl-[24px]">
          <svg viewBox="0 0 8 8" className="h-[8px] w-[8px]" fill="#1f6f96"><path d="M8 0v8H0z" /></svg>
          <Fit w={69.500} className="ml-[6px] text-[15px] font-bold text-[#1f87b6]">Split Data</Fit>
        </div>
        <div className="flex w-[252px] shrink-0 flex-col pl-[45px]">
          <div className="flex h-[31px] items-center"><Fit w={94.500}>Splitting mode</Fit></div>
          <Select label="Split Rows" w={66} />
          <div className="mt-2 flex h-[29px] items-center justify-between"><Fit w={176}>Fraction of rows in the firs...</Fit><Grip /></div>
          <div className="flex h-[27px] items-center border-2 border-black pl-[9px] pt-0.5 text-black"><Fit w={27}>0.50</Fit></div>
          <div className="mt-2 flex h-[31px] items-center">
            <span className="ml-px flex h-[16px] w-[16px] items-center justify-center rounded-[3px] bg-[#3b99fc]"><svg viewBox="0 0 10 10" className="h-[11px] w-[11px]" fill="none" stroke="#fff" strokeWidth="1.600"><path d="M1 5.500L3.800 8.500 9 1" /></svg></span>
            <Fit w={110.500} className="ml-[10px]">Randomized split</Fit>
            <span className="ml-auto"><Grip /></span>
          </div>
          <div className="mt-[6.500px] flex h-[27.500px] items-center justify-between"><Fit w={87.500}>Random seed</Fit><Grip /></div>
          <div className="flex h-[27px] items-center border-2 border-black pl-[9px] pt-0.5 text-black"><Fit w={8}>0</Fit></div>
          <div className="mt-[10px] flex h-[28px] items-center"><Fit w={88.500}>Stratified split</Fit></div>
          <Select label="False" w={31.500} />
          <div className="mt-[9px] flex flex-col text-black">
            <div className="flex h-[27px] items-center"><span className="w-[119px] text-[13.500px] text-[#8d939a]"><Fit w={71}>START TIME</Fit></span><Fit w={84.500}>12/16/2016...</Fit></div>
            <div className="flex h-[27px] items-center"><span className="w-[119px] text-[13.500px] text-[#8d939a]"><Fit w={59.500}>END TIME</Fit></span><Fit w={84.500}>12/16/2016...</Fit></div>
            <div className="flex h-[26px] items-center"><span className="w-[119px] text-[13.500px] text-[#8d939a]"><Fit w={86}>ELAPSED TIME</Fit></span><Fit w={72}>0:00:00.000</Fit></div>
          </div>
        </div>
      </div>
      <div className="flex flex-1 flex-col border-t border-[#dedede] bg-[#f1f1f1] pl-[11px]">
        <div className="mt-[9px] flex h-[28px] items-center">
          <span className="flex h-[15px] w-[15px] items-center justify-center rounded-full bg-[#c4c4c4] text-[12px] font-bold leading-none text-white">?</span>
          <Fit w={78} className="ml-[5px] text-[15.500px] font-bold">Quick Help</Fit>
          <svg viewBox="0 0 12 8" className="mb-[5px] ml-[172px] h-[7px] w-[11px]" fill="none" stroke="#2b3340" strokeWidth="2.800"><path d="M1 1l5 5 5-5" /></svg>
        </div>
        <div className="mt-[17px] flex flex-col leading-5">
          <Fit w={273.500}>Split the rows of a dataset into two distinct</Fit>
          <Fit w={25}>sets</Fit>
          <Fit w={84} className="text-[#1f87c4]">(more help...)</Fit>
        </div>
      </div>
    </div>
  );
}

/* ---------- command bar ---------- */
const Save = () => (
  <svg viewBox="0 0 22 22" className="h-[22px] w-[22px]" fill="currentColor" fillRule="evenodd">
    <path d="M3 0h16l3 3v19h-5v-6H7v1h-2v5H0V3zM3.500 3v8h15V3zM8.500 17.500h3.500V22H8.500z" />
  </svg>
);
const COMMANDS: { lines: [string, number][]; icon: ReactNode }[] = [
  { lines: [["RUN HISTORY", 63]], icon: <svg viewBox="0 0 24 24" className="h-[23px] w-[23px]" fill="none" stroke="currentColor"><circle cx="12" cy="12" r="10.500" strokeWidth="2.200" /><path d="M11.500 6v7H17" strokeWidth="2.800" /></svg> },
  { lines: [["SAVE", 23.500]], icon: <Save /> },
  { lines: [["SAVE AS", 38]], icon: <Save /> },
  { lines: [["DISCARD CHANGES", 89]], icon: <svg viewBox="0 0 20 23" className="h-[23px] w-[20px]" fill="none" stroke="currentColor" strokeWidth="2"><path d="M1 4h18M7 3.500V1.200h6v2.300M3 7l1 15h12l1-15" /><path d="M7.300 7.500v11M10 7.500v11M12.700 7.500v11" strokeWidth="1.500" /><path d="M2.500 7h15" /></svg> },
  { lines: [["RUN", 20.500]], icon: <svg viewBox="0 0 16 22" className="ml-0.5 h-[22px] w-[16px]" fill="currentColor"><path d="M0 0l16 11L0 22z" /></svg> },
  { lines: [["SET UP WEB", 54], ["SERVICE", 37]], icon: <span className="relative"><Wrench className="h-[26px] w-[26px]" /><svg viewBox="0 0 14 14" className="absolute bottom-0 right-[4px] h-[13px] w-[13px]" fill="#3e4450" stroke="#fff" strokeWidth="1.200"><circle cx="7" cy="7" r="6" /><ellipse cx="7" cy="7" rx="2.700" ry="6" /><path d="M1 7h12" /></svg></span> },
  { lines: [["PUBLISH TO", 54], ["GALLERY", 40]], icon: <svg viewBox="0 0 24 24" className="h-[24px] w-[24px]"><path d="M4 9V1.500h18.500V22H13" fill="none" stroke="currentColor" strokeWidth="2.500" /><circle cx="7" cy="12" r="4" fill="currentColor" /><path d="M0 24c0-9 14-9 14 0z" fill="currentColor" /><path d="M12 6h6M13.500 6v3l-1 3M16.500 6v3l3 7h-6z" stroke="currentColor" strokeWidth="1.300" fill="currentColor" /></svg> },
];
function CommandBar() {
  return (
    <div className="flex h-[67px] shrink-0 rounded-b-md border-t border-[#9a9da3] bg-[#3e4450] font-['Open_Sans',sans-serif] text-white">
      <div className="flex w-[381.500px] items-center pl-[32px]">
        <svg viewBox="0 0 28 28" className="h-[28px] w-[28px]" fill="currentColor"><path d="M10 0h8v10h10v8H18v10h-8V18H0v-8h10z" /></svg>
        <Fit w={35} className="ml-[9px] text-[15px] font-bold">NEW</Fit>
      </div>
      {COMMANDS.map((c) => (
        <div key={c.lines[0][0]} className="flex w-[94.900px] flex-col items-center">
          <span className="mb-[1.500px] mt-[9.500px] flex h-[27px] items-center">{c.icon}</span>
          {c.lines.map(([t, w]) => (
            <Fit key={t} w={w} className="text-[10.500px] font-semibold leading-[10px]">{t}</Fit>
          ))}
        </div>
      ))}
    </div>
  );
}

/* ---------- dock ---------- */
const Office = ({ c, l }: { c: string; l: string }) => (
  <span className="relative flex h-[28px] w-[28px] items-center">
    <span className="absolute right-0 h-[22px] w-[15px] border border-white bg-[repeating-linear-gradient(180deg,#fff_0_2px,#9aa4b0_2px_3px)]" />
    <svg viewBox="0 0 18 28" className="absolute left-0 h-[28px] w-[16px]"><path d="M0 3L18 0v28L0 25z" fill={c} /></svg>
    <span className="relative w-[15px] text-center font-['Open_Sans',sans-serif] text-[12.500px] font-bold leading-none text-white">{l}</span>
  </span>
);
const Round = ({ cls, children }: { cls: string; children?: ReactNode }) => (
  <span className={`flex h-[28px] w-[28px] items-center justify-center rounded-full ${cls}`}>{children}</span>
);
const Finder = ({ className = "h-[26px] w-[26px]" }: { className?: string }) => (
  <svg viewBox="0 0 26 26" className={className}>
    <rect width="26" height="26" rx="1.500" fill="#e4edf6" /><path d="M0 0h15c-3 5-3.500 9-3.500 14H15c0 4 .5 8 1.500 12H0z" fill="#1b9df5" />
    <path d="M5 17c4 5 12 5 16 0M7 7v3M19 7v3M15 0c-3 5-3.500 9-3.500 14H15c0 4 .5 8 1.500 12" fill="none" stroke="#14293f" strokeWidth="1.300" />
  </svg>
);
const ChromeBall = ({ className = "h-[29px] w-[29px]" }: { className?: string }) => (
  <svg viewBox="0 0 30 30" className={className}>
    <circle cx="15" cy="15" r="15" fill="#f7cf38" />
    <path d="M2 7.500A15 15 0 0 1 28 7.500H15L8.500 19z" fill="#e0402f" /><path d="M2 7.500A15 15 0 0 0 15 30l6.500-11.500-13 0z" fill="#31a352" />
    <circle cx="15" cy="15" r="7" fill="#fff" /><circle cx="15" cy="15" r="5.500" fill="#4286f4" />
  </svg>
);
const APPS: { icon: ReactNode; run?: boolean }[] = [
  { icon: <Finder />, run: true },
  { icon: <Round cls="border border-[#c8c8d2] bg-[radial-gradient(circle_at_50%_70%,#eef_0%,#4ec6e6_18%,#6f3fae_42%,#1c1334_68%)]" /> },
  { icon: <Round cls="bg-[linear-gradient(180deg,#b3b8bd,#7d8287)]"><svg viewBox="0 0 20 20" className="h-[19px] w-[19px]" fill="#3c4045"><path d="M18 2c-6 0-9 3-11 7l-4 1-1 3 4-1 3 3-1 4 3-1 1-4c4-2 6-6 6-12zM4 15l-3 4 4-3z" /><circle cx="13" cy="7" r="1.700" fill="#aaa" /></svg></Round> },
  { icon: <Round cls="border-2 border-[#d9e3ea] bg-[#1e96ea]"><svg viewBox="0 0 20 20" className="h-[20px] w-[20px]"><path d="M17 3l-8.500 5.500 3 3z" fill="#ef4136" /><path d="M3 17l5.500-8.500 3 3z" fill="#fff" /></svg></Round> },
  { icon: <span className="flex h-[27px] w-[22px] -rotate-6 items-center justify-center border-2 border-[#f0f0f0] bg-[linear-gradient(180deg,#3e86cf,#a9c9e8)]"><svg viewBox="0 0 16 18" className="h-[18px] w-[16px]"><path d="M3 1l3 6 3-1 3 4 3 5-5 1-4-3-3-1 1-3z" fill="#6b4a23" /><path d="M8 10l4 4-4 2z" fill="#d8b070" /></svg></span> },
  { icon: <span className="flex h-[28px] w-[22px] rotate-3 items-center justify-center rounded-sm border-r-2 border-r-[#6bb86b] bg-[#ae8044]"><span className="h-[12px] w-[12px] rounded-full border border-[#8a6230] bg-[#a3763b]" /></span> },
  { icon: <span className="flex h-[27px] w-[23px] -rotate-3 flex-col items-center bg-[#f6f6f6]"><span className="h-[7px] w-full bg-[#e4453d] text-center font-['Inter',sans-serif] text-[6px] leading-[7px] text-white">DEC</span><span className="font-['Inter',sans-serif] text-[14px] leading-[19px] text-[#222]">16</span></span> },
  { icon: <span className="h-[27px] w-[22px] -rotate-3 border-t-[6px] border-[#fbca2f] bg-[#f7f6f2]" /> },
  { icon: <span className="flex h-[28px] w-[21px] -rotate-3 flex-col justify-center gap-[2px] bg-[#f8f8f8] pl-[3px]"><span className="h-[4px] w-[4px] rounded-full bg-[#f59b23]" /><span className="h-[4px] w-[4px] rounded-full bg-[#3f8be0]" /><span className="h-[4px] w-[4px] rounded-full bg-[#4cbf4c]" /><span className="h-[4px] w-[4px] rounded-full bg-[#c35fd2]" /></span> },
  { icon: <svg viewBox="0 0 28 28" className="h-[28px] w-[28px]"><path d="M13 1C5 1 1 6 1 12c0 4 2 7 4 8l-1 5 6-3c8 1 16-3 16-10S20 1 13 1z" fill="#2f9df4" /><path d="M19 12c-5 0-8 3-8 6.500s3 6 8 6l5 2-1-3c3-1 4-3 4-5 0-4-3-6.500-8-6.500z" fill="#eaf4fd" /><circle cx="15.500" cy="18.500" r="1.300" fill="#2b6cb3" /><circle cx="19.500" cy="18.500" r="1.300" fill="#2b6cb3" /><circle cx="23.500" cy="18.500" r="1.300" fill="#2b6cb3" /></svg> },
  { icon: <svg viewBox="0 0 24 28" className="h-[28px] w-[24px]"><path d="M2 0h20l2 12H0z" fill="#1ba3f2" /><path d="M6 2.500h12v6H6z" fill="#f0f3f5" /><circle cx="9.500" cy="5.500" r="2" fill="#e9573f" /><path d="M12 4h5v3h-5z" fill="#5bbf6b" /><path d="M10.800 12h2.400v13h-2.400z" fill="#c9d3da" /><ellipse cx="12" cy="26" rx="6" ry="2" fill="#d6dde2" /></svg> },
  { icon: <Round cls="border-2 border-[#d5e4f0] bg-[linear-gradient(180deg,#1fc0fb,#1a72ee)]"><svg viewBox="0 0 20 20" className="h-[19px] w-[19px]" fill="none" stroke="#fff" strokeWidth="1.900" strokeLinecap="round"><path d="M11 3L4.500 15.500M9 3l6.500 12.500M2 12h16" /></svg></Round> },
  { icon: <span className="flex h-[27px] w-[27px] items-center justify-center bg-[linear-gradient(180deg,#aeb2b5,#6e7275)]"><svg viewBox="0 0 24 24" className="h-[24px] w-[24px]" fill="none" stroke="#2c2e30"><circle cx="12" cy="12" r="10" strokeWidth="2.500" strokeDasharray="2 1" /><circle cx="12" cy="12" r="7" strokeWidth="2" /><path d="M12 12V5M12 12l6 4M12 12l-6 4" strokeWidth="1.800" /><circle cx="12" cy="12" r="2.300" fill="#aaa" strokeWidth="1.300" /></svg></span> },
  { icon: <ChromeBall />, run: true },
  { icon: <Office c="#2a5699" l="W" />, run: true },
  { icon: <span className="h-[26px] w-[27px] border-2 border-[#8f8f8f] bg-[#262626] pl-0.5 font-['Liberation_Mono',monospace] text-[7px] leading-[9px] text-white">&gt;_</span>, run: true },
  { icon: <Office c="#1e7145" l="X" />, run: true },
  { icon: <Round cls="h-[30px] w-[30px] bg-[radial-gradient(circle_at_50%_75%,#58b3f5,#1d5db4_65%,#8fc3ef)] font-['Liberation_Serif',serif] text-[20px] text-white">R</Round>, run: true },
  { icon: <Office c="#80397b" l="N" />, run: true },
  { icon: <Office c="#d24726" l="P" />, run: true },
  { icon: <Round cls="border-[2.500px] border-[#ce5fdc] bg-[#f9f9fc]"><svg viewBox="0 0 16 16" className="h-[17px] w-[17px]"><path d="M5.500 12.500V3l8-1.500v9.500" fill="none" stroke="#e34a8c" strokeWidth="1.700" /><circle cx="4" cy="12.800" r="2.200" fill="#9b5be0" /><circle cx="12" cy="11.300" r="2.200" fill="#e34a8c" /></svg></Round>, run: true },
  { icon: <Round cls="border-2 border-[#eef3e4] bg-[radial-gradient(circle,#a9d55e,#4f7f23)]"><svg viewBox="0 0 20 20" className="h-[20px] w-[20px]" stroke="#1f2a12" strokeWidth="1.600"><path d="M3 7.500l7 3.500 5-3.500" fill="none" /><circle cx="10" cy="10.500" r="1.200" fill="#1f2a12" /></svg></Round>, run: true },
  { icon: <svg viewBox="0 0 29 28" className="h-[29px] w-[30px]"><path d="M1 6l23-3-2 22-20 2z" fill="#1f8ff2" /><path d="M5 22L13 8l6 14M7 18h12" fill="none" stroke="#cfe6fb" strokeWidth="1.200" /><path d="M23 2l-4 24" stroke="#1f2226" strokeWidth="3" strokeLinecap="round" /><path d="M17 1l8-1 4 4-3 0-3-1-6 1z" fill="#c9ced2" /></svg>, run: true },
];
const WordBadge = () => <span className="flex h-[10px] w-[10px] items-center justify-center bg-[#2a5699] text-[8px] font-bold leading-none text-white">W</span>;
const FinderBadge = () => <Finder className="h-[10px] w-[10px]" />;
const ChromeBadge = () => <ChromeBall className="h-[11px] w-[11px]" />;
const THUMBS: { bar: string; body: string; badge: ReactNode; tall?: boolean }[] = [
  { bar: "bg-[#d9d9d9]", body: "bg-[#f1f1f1]", badge: <FinderBadge /> },
  { bar: "bg-[#2f5fa8]", body: "bg-[#eef2f7]", badge: <WordBadge /> },
  { bar: "bg-[#80397b]", body: "bg-[#efe0d4]", badge: <span className="flex h-[10px] w-[10px] items-center justify-center bg-[#80397b] text-[8px] font-bold leading-none text-white">N</span> },
  { bar: "bg-[#d5d5d5]", body: "bg-[#f3efee]", badge: <ChromeBadge /> },
  { bar: "bg-[#cfcfcf]", body: "bg-[#ececec]", badge: <FinderBadge /> },
  { bar: "bg-[#2f5fa8]", body: "bg-[#e8ebef]", badge: <WordBadge /> },
  { bar: "bg-[#cfcfcf]", body: "bg-[#f0eeee]", badge: <FinderBadge /> },
  { bar: "bg-[#2f5fa8]", body: "bg-[#f3f3f3]", badge: <WordBadge /> },
  { bar: "bg-[#cfcfcf]", body: "bg-[#e9e9e6]", badge: <FinderBadge /> },
  { bar: "bg-[#d0d0d0]", body: "bg-[#e6e6e6]", badge: <FinderBadge />, tall: true },
  { bar: "bg-[#d24726]", body: "bg-[#f1e2e2]", badge: <span className="flex h-[10px] w-[10px] items-center justify-center bg-[#d24726] text-[8px] font-bold leading-none text-white">P</span> },
  { bar: "bg-[#555]", body: "bg-[#f4f4f4]", badge: <ChromeBadge /> },
  { bar: "bg-[#2f5fa8]", body: "bg-[#ececec]", badge: <WordBadge /> },
  { bar: "bg-[#1e7145]", body: "bg-[#f1f1f1]", badge: <span className="flex h-[10px] w-[10px] items-center justify-center bg-[#1e7145] text-[8px] font-bold leading-none text-white">X</span> },
  { bar: "bg-[#dcdcdc]", body: "bg-[#f6f3f3]", badge: <span className="block h-[10px] w-[10px] -skew-x-6 bg-[#1f8ff2]" />, tall: true },
  { bar: "bg-[#3d434b]", body: "bg-[#e9edf0]", badge: <ChromeBadge /> },
];
function Dock() {
  return (
    <div className="absolute left-[24px] top-[850px] flex h-[43px] w-[1381px] items-start overflow-hidden rounded-t-[5px] border-x border-t border-[#75737a] bg-[linear-gradient(90deg,#5d5b62_0%,#67595e_25%,#685a60_36%,#646470_47%,#697286_60%,#7a6a72_67%,#a9694f_76%,#a06753_84%,#6b6272_91%,#5f6375_100%)] font-['Open_Sans',sans-serif]">
      <div className="ml-[2px] flex">
        {APPS.map((a, i) => (
          <div key={i} className="flex w-[33.200px] flex-col items-center">
            <span className="flex h-[36px] items-center justify-center">{a.icon}</span>
            {a.run && <span className="h-[4px] w-[4px] rounded-full bg-black" />}
          </div>
        ))}
      </div>
      <span className="ml-[7px] mt-[4px] h-[33px] w-px bg-[#45444c]" />
      <div className="ml-[6px] flex">
        <div className="flex h-[37px] w-[33.200px] items-center justify-center">
          <svg viewBox="0 0 22 30" className="h-[29px] w-[22px]"><path d="M0 0h14l8 9v21H0z" fill="#f6f6f6" /><path d="M14 0v9h8z" fill="#cfcfcf" /><path d="M4 7h6M4 10h12M4 13h10M4 16h13M4 19h11M4 22h8" stroke="#b5b5b5" strokeWidth="1" /><path d="M5 26.500h12" stroke="#888" strokeWidth="2" strokeDasharray="2 1" /></svg>
        </div>
        {THUMBS.map((t, i) => (
          <div key={i} className="flex h-[37px] w-[33.250px] items-center justify-center">
            <div className={`relative ${t.tall ? (i > 12 ? "h-[26px] w-[29px]" : "h-[28px] w-[17px]") : "mt-1 h-[21px] w-[29px]"} ${t.body}`}>
              <div className={`h-[2px] ${t.bar}`} />
              <div className="ml-[3px] mt-[4px] h-[10px] w-[17px] max-w-[70%] bg-[repeating-linear-gradient(180deg,#cdcfd3_0_1px,transparent_1px_3px)]" />
              <span className="absolute -bottom-0.5 -right-px">{t.badge}</span>
            </div>
          </div>
        ))}
        <div className="flex h-[37px] w-[33.200px] items-center justify-center">
          <svg viewBox="0 0 24 30" className="h-[30px] w-[24px]"><path d="M1 5h22l-3 24H4z" fill="#d8d9db" /><path d="M5 8l1.500 19M10 8v19M14.500 8v19M19 8l-1.500 19" stroke="#b4b6b9" strokeWidth="1" /><ellipse cx="12" cy="4.500" rx="11" ry="3.500" fill="#8e8e90" stroke="#efefef" /><path d="M4 4l3-3 3 2 4-2 3 2 3 0-1 3-13 1z" fill="#f4f4f4" /><path d="M8 3l2 2M14 2l2 3" stroke="#a14444" /></svg>
        </div>
      </div>
    </div>
  );
}

export default function App() {
  return (
    <div className="relative h-[893px] w-[1429px] overflow-hidden bg-[#1a171b]">
      <div className="absolute inset-x-0 top-0 h-[60px] bg-[linear-gradient(90deg,#b5706b_0%,#a86f6f_15%,#83646f_35%,#745663_52%,#94605c_78%,#b0654f_86%,#6d6079_96%,#5d5f80_100%)]" />
      <div className="absolute left-0 top-[50px] h-[843px] w-[3px] bg-[linear-gradient(180deg,#b3685c_0%,#b9776a_30%,#a56a5c_36%,#629aa2_37%,#4e8791_42%,#121217_43.5%,#1c2430_60%,#34475a_68%,#0d0b0e_75%,#1b1514_100%)]" />
      <div className="absolute left-[58px] top-[30px] flex h-[20px] w-[1371px] gap-[10px] overflow-hidden rounded-t-[5px] bg-[linear-gradient(90deg,#f0efef_0%,#eee_33%,#d3d3d3_42%,#cecece_100%)] pl-[10px] pt-[6px]">
        <span className="h-[13px] w-[13px] rounded-full bg-[#d6d4d4]" />
        <span className="h-[13px] w-[13px] rounded-full bg-[#d6d4d4]" />
        <span className="h-[13px] w-[13px] rounded-full bg-[#d6d4d4]" />
        <span className="ml-[582px] font-['Inter',sans-serif] text-[12.500px] leading-[14px] text-[#8b8b8b]">RStudio</span>
      </div>
      <MenuBar />
      <div className="absolute left-[2px] top-[40px] flex h-[821px] w-[1427px] flex-col overflow-hidden rounded-md">
        <TabStrip />
        <AddressBar />
        <StudioHeader />
        <div className="flex h-[617px] shrink-0">
          <NavRail />
          <ModulePanel />
          <Workspace />
          <Properties />
        </div>
        <CommandBar />
      </div>
      <Dock />
    </div>
  );
}
